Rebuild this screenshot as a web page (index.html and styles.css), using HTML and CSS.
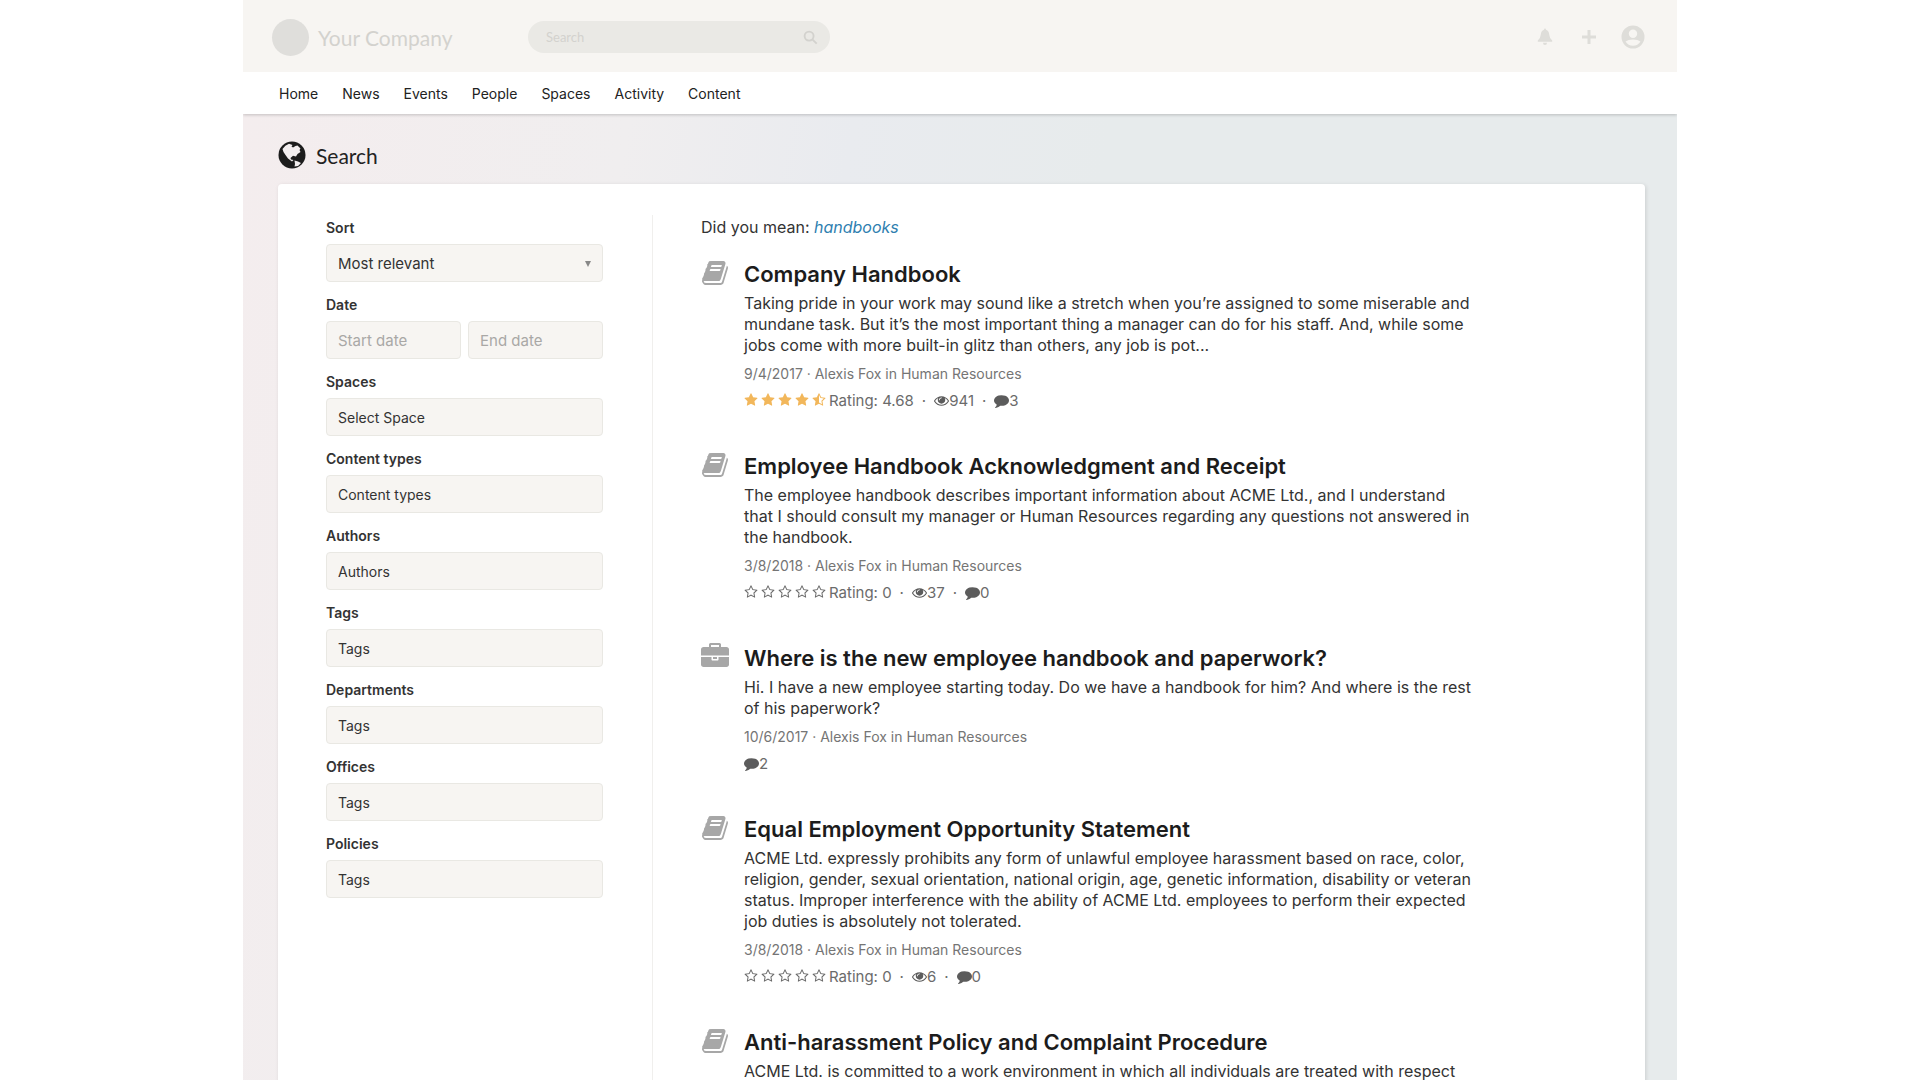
FILE: index.html
```html
<!DOCTYPE html>
<html lang="en">
<head>
<meta charset="utf-8">
<title>Search - Your Company</title>
<meta name="viewport" content="width=device-width, initial-scale=1">
<link rel="stylesheet" href="styles.css">
</head>
<body>
<svg class="sprite" aria-hidden="true">
  <symbol id="star" viewBox="0 0 1792 1792"><path d="M1728 647q0 22-26 48l-363 354 86 500q1 7 1 20 0 21-10.5 35.5t-30.5 14.5q-19 0-40-12l-449-236-449 236q-22 12-40 12-21 0-31.5-14.5t-10.5-35.5q0-6 2-20l86-500-364-354q-25-27-25-48 0-37 56-46l502-73 225-455q19-41 49-41t49 41l225 455 502 73q56 9 56 46z"/></symbol>
  <symbol id="star-o" viewBox="0 0 1792 1792"><path d="M1201 1004l306-297-422-62-189-382-189 382-422 62 306 297-73 421 378-199 377 199zm527-357q0 22-26 48l-363 354 86 500q1 7 1 20 0 50-41 50-19 0-40-12l-449-236-449 236q-22 12-40 12-21 0-31.5-14.5t-10.5-35.5q0-6 2-20l86-500-364-354q-25-27-25-48 0-37 56-46l502-73 225-455q19-41 49-41t49 41l225 455 502 73q56 9 56 46z"/></symbol>
  <symbol id="star-half" viewBox="0 0 1792 1792"><path d="M1250 957l257-250-356-52-66-10-30-60-159-322v963l59 31 318 168-60-355-12-66zm452-262l-363 354 86 500q5 33-6 51.5t-34 18.5q-17 0-40-12l-449-236-449 236q-23 12-40 12-23 0-34-18.5t-6-51.5l86-500-364-354q-32-32-23-59.5t54-34.5l502-73 225-455q20-41 49-41 28 0 49 41l225 455 502 73q45 7 54 34.5t-24 59.5z"/></symbol>
  <symbol id="eye" viewBox="0 0 1792 1792"><path d="M1664 960q-152-236-381-353 61 104 61 225 0 185-131.5 316.5t-316.5 131.5-316.5-131.5-131.5-316.5q0-121 61-225-229 117-381 353 133 205 333.5 326.5t434.5 121.5 434.5-121.5 333.5-326.5zm-720-384q0-20-14-34t-34-14q-125 0-214.5 89.5t-89.5 214.5q0 20 14 34t34 14 34-14 14-34q0-86 61-147t147-61q20 0 34-14t14-34zm848 384q0 34-20 69-140 230-376.5 368.5t-499.5 138.5-499.5-139-376.5-368q-20-35-20-69t20-69q140-229 376.5-368t499.5-139 499.5 139 376.5 368q20 35 20 69z"/></symbol>
  <symbol id="comment" viewBox="0 0 1792 1792"><path d="M1792 896q0 174-120 321.5t-326 233-450 85.5q-70 0-145-8-198 175-460 242-49 14-114 22-17 2-30.5-9t-17.5-29v-1q-3-4-.5-12t2-10 4.5-9.5l6-9 7-8.5 8-9q7-8 31-34.5t34.5-38 31-39.5 32.5-51 27-59 26-76q-157-89-247.5-220t-90.5-281q0-130 71-248.5t191-204.5 286-136.5 348-50.5q244 0 450 85.5t326 233 120 321.5z"/></symbol>
  <symbol id="book" viewBox="0 0 1792 1792"><path d="M1703 478q40 57 18 129l-275 906q-19 64-76.5 107.5t-122.5 43.5h-923q-77 0-148.5-53.5t-99.5-131.5q-24-67-2-127 0-4 3-27t4-37q1-8-3-21.5t-3-19.5q2-11 8-21t16.5-23.5 16.5-23.5q23-38 45-91.5t30-91.5q3-10 .5-30t-.5-28q3-11 17-28t17-23q21-36 42-92t25-90q1-9-2.5-32t.5-28q4-13 22-30.5t22-22.5q19-26 42.5-84.5t27.5-96.5q1-8-3-25.5t-2-26.5q2-8 9-18t18-23 17-21q8-12 16.5-30.5t15-35 16-36 19.5-32 26.5-23.5 36-11.5 47.5 5.5l-1 3q38-9 51-9h761q74 0 114 56t18 130l-274 906q-36 119-71.5 153.5t-128.5 34.5h-869q-27 0-38 15-11 16-1 43 24 70 144 70h923q29 0 56-15.5t35-41.5l300-987q7-22 5-57 38 15 59 43zm-1064 2q-4 13 2 22.5t20 9.5h608q13 0 25.5-9.5t16.5-22.5l21-64q4-13-2-22.5t-20-9.5h-608q-13 0-25.5 9.5t-16.5 22.5zm-83 256q-4 13 2 22.5t20 9.5h608q13 0 25.5-9.5t16.5-22.5l21-64q4-13-2-22.5t-20-9.5h-608q-13 0-25.5 9.5t-16.5 22.5z"/></symbol>
  <symbol id="briefcase" viewBox="0 0 1792 1792"><path d="M640 256h512v-128h-512v128zm1152 640v480q0 66-47 113t-113 47h-1472q-66 0-113-47t-47-113v-480h672v160q0 26 19 45t45 19h320q26 0 45-19t19-45v-160h672zm-768 0v128h-256v-128h256zm768-480v384h-1792v-384q0-66 47-113t113-47h352v-160q0-40 28-68t68-28h576q40 0 68 28t28 68v160h352q66 0 113 47t47 113z"/></symbol>
</svg>

<div class="site">
  <header class="topbar">
    <a class="brand" href="#"><span class="brand-mark"></span>Your Company</a>
    <form class="site-search" role="search">
      <input class="site-search-input" type="search" placeholder="Search" aria-label="Search the site">
      <button class="icon-button" type="button" aria-label="Search">
        <svg class="icon-search" viewBox="0 0 16 16"><circle cx="6.5" cy="6.5" r="4.8"/><path d="M10.2 10.2L14.6 14.6"/></svg>
      </button>
    </form>
    <div class="actions">
      <button class="icon-button" type="button" aria-label="Notifications">
        <svg class="icon-action" viewBox="0 0 16 18"><path d="M8 0.5q1 0 1 1.200Q12 2.600 12.300 7q0.300 3.600 2.900 5.600v1.200H0.800v-1.200Q3.400 10.600 3.700 7Q4 2.600 7 1.700Q7 0.500 8 0.500zM6 14.800h4q0 2.200-2 2.200t-2-2.200z"/></svg>
      </button>
      <button class="icon-button" type="button" aria-label="Create">
        <svg class="icon-action" viewBox="0 0 16 18"><path d="M6.500 2h3v5.500h5.500v3H9.500v5.500h-3v-5.500H1v-3h5.500z"/></svg>
      </button>
      <button class="icon-button" type="button" aria-label="Account">
        <svg class="icon-account" viewBox="0 0 24 24"><path fill-rule="evenodd" d="M12 0.500a11.500 11.500 0 1 0 0 23a11.500 11.500 0 1 0 0-23zM12 4.500a4.200 4.200 0 1 1 0 8.400a4.200 4.200 0 1 1 0-8.400zM4.500 16.500q2.500-2 7.500-2t7.500 2q-2.600 4.200-7.500 4.200t-7.500-4.200z"/></svg>
      </button>
    </div>
  </header>

  <nav class="mainnav" aria-label="Main">
    <a href="#">Home</a>
    <a href="#">News</a>
    <a href="#">Events</a>
    <a href="#">People</a>
    <a href="#">Spaces</a>
    <a href="#">Activity</a>
    <a href="#">Content</a>
  </nav>

  <main class="page">
    <div class="page-title">
      <svg class="icon-globe" viewBox="0 0 28 28" aria-hidden="true"><circle cx="14" cy="14" r="13.500" fill="#1c1c1c"/><path fill="#f3eeef" d="M4.500 8Q7 4 11 2.800L14.500 4L13.500 5.500L15 6.500L17.500 5L19.500 4.500L22.500 7.500L21.500 9L22.500 11L19.500 13L18 15.500L15 14.800L12.500 17L13 18.500L15.500 19L14 20.500L10 17.500L7.500 14L5.500 11zM16.500 19.500L20 20.500L23 22L20 25L16.500 25.500L17 23z"/></svg>
      <h1>Search</h1>
    </div>

    <div class="panel">
      <form class="filters">
        <div class="field">
          <label for="sort">Sort</label>
          <div class="select"><select class="control control-large" id="sort"><option>Most relevant</option></select></div>
        </div>
        <div class="field">
          <label for="start">Date</label>
          <div class="dates">
            <input class="control control-large" id="start" type="text" placeholder="Start date">
            <input class="control control-large" type="text" placeholder="End date" aria-label="End date">
          </div>
        </div>
        <div class="field"><label for="spaces">Spaces</label><input class="control" id="spaces" type="text" value="Select Space"></div>
        <div class="field"><label for="types">Content types</label><input class="control" id="types" type="text" value="Content types"></div>
        <div class="field"><label for="authors">Authors</label><input class="control" id="authors" type="text" value="Authors"></div>
        <div class="field"><label for="tags">Tags</label><input class="control" id="tags" type="text" value="Tags"></div>
        <div class="field"><label for="departments">Departments</label><input class="control" id="departments" type="text" value="Tags"></div>
        <div class="field"><label for="offices">Offices</label><input class="control" id="offices" type="text" value="Tags"></div>
        <div class="field"><label for="policies">Policies</label><input class="control" id="policies" type="text" value="Tags"></div>
      </form>

      <section class="results" aria-label="Results">
        <p class="suggestion">Did you mean: <a href="#">handbooks</a></p>

        <article class="result">
          <svg class="result-icon"><use href="#book"/></svg>
          <div class="result-body">
            <h2><a href="#">Company Handbook</a></h2>
            <p class="excerpt">Taking pride in your work may sound like a stretch when you’re assigned to some miserable and mundane task. But it’s the most important thing a manager can do for his staff. And, while some jobs come with more built-in glitz than others, any job is pot...</p>
            <p class="byline">9/4/2017 · Alexis Fox in Human Resources</p>
            <div class="stats">
              <span class="stars stars-rated"><svg><use href="#star"/></svg><svg><use href="#star"/></svg><svg><use href="#star"/></svg><svg><use href="#star"/></svg><svg><use href="#star-half"/></svg></span>
              <span>Rating: 4.68</span><span class="dot">·</span>
              <span class="stat"><svg><use href="#eye"/></svg>941</span><span class="dot">·</span>
              <span class="stat"><svg><use href="#comment"/></svg>3</span>
            </div>
          </div>
        </article>

        <article class="result">
          <svg class="result-icon"><use href="#book"/></svg>
          <div class="result-body">
            <h2><a href="#">Employee Handbook Acknowledgment and Receipt</a></h2>
            <p class="excerpt">The employee handbook describes important information about ACME Ltd., and I understand that I should consult my manager or Human Resources regarding any questions not answered in the handbook.</p>
            <p class="byline">3/8/2018 · Alexis Fox in Human Resources</p>
            <div class="stats">
              <span class="stars"><svg><use href="#star-o"/></svg><svg><use href="#star-o"/></svg><svg><use href="#star-o"/></svg><svg><use href="#star-o"/></svg><svg><use href="#star-o"/></svg></span>
              <span>Rating: 0</span><span class="dot">·</span>
              <span class="stat"><svg><use href="#eye"/></svg>37</span><span class="dot">·</span>
              <span class="stat"><svg><use href="#comment"/></svg>0</span>
            </div>
          </div>
        </article>

        <article class="result">
          <svg class="result-icon"><use href="#briefcase"/></svg>
          <div class="result-body">
            <h2><a href="#">Where is the new employee handbook and paperwork?</a></h2>
            <p class="excerpt">Hi. I have a new employee starting today. Do we have a handbook for him? And where is the rest of his paperwork?</p>
            <p class="byline">10/6/2017 · Alexis Fox in Human Resources</p>
            <div class="stats">
              <span class="stat"><svg><use href="#comment"/></svg>2</span>
            </div>
          </div>
        </article>

        <article class="result">
          <svg class="result-icon"><use href="#book"/></svg>
          <div class="result-body">
            <h2><a href="#">Equal Employment Opportunity Statement</a></h2>
            <p class="excerpt">ACME Ltd. expressly prohibits any form of unlawful employee harassment based on race, color, religion, gender, sexual orientation, national origin, age, genetic information, disability or veteran status. Improper interference with the ability of ACME Ltd. employees to perform their expected job duties is absolutely not tolerated.</p>
            <p class="byline">3/8/2018 · Alexis Fox in Human Resources</p>
            <div class="stats">
              <span class="stars"><svg><use href="#star-o"/></svg><svg><use href="#star-o"/></svg><svg><use href="#star-o"/></svg><svg><use href="#star-o"/></svg><svg><use href="#star-o"/></svg></span>
              <span>Rating: 0</span><span class="dot">·</span>
              <span class="stat"><svg><use href="#eye"/></svg>6</span><span class="dot">·</span>
              <span class="stat"><svg><use href="#comment"/></svg>0</span>
            </div>
          </div>
        </article>

        <article class="result">
          <svg class="result-icon"><use href="#book"/></svg>
          <div class="result-body">
            <h2><a href="#">Anti-harassment Policy and Complaint Procedure</a></h2>
            <p class="excerpt">ACME Ltd. is committed to a work environment in which all individuals are treated with respect</p>
          </div>
        </article>
      </section>
    </div>
  </main>
</div>
</body>
</html>
```
FILE: styles.css
```css
* { box-sizing: border-box; }

body {
  margin: 0;
  height: 100vh;
  overflow: hidden;
  background: #fff;
  color: #333;
  font-family: Inter, "Liberation Sans", sans-serif;
  font-size: 16px;
  line-height: 21px;
}

h1, h2, p { margin: 0; }
a { color: inherit; text-decoration: none; }
input, select, button { font: inherit; }
svg { display: block; fill: currentColor; }

.sprite { display: none; }

.site {
  max-width: 1434px;
  min-height: 100vh;
  margin: 0 auto;
  display: flex;
  flex-direction: column;
}

/* Top bar */
.topbar {
  display: flex;
  align-items: center;
  height: 72px;
  flex: none;
  padding: 2px 32px 0 29px;
  background: #f7f5f2;
  color: #deddd9;
}

.brand {
  display: flex;
  align-items: center;
  gap: 9px;
  width: 256px;
  font-family: Lato, "Liberation Sans", sans-serif;
  font-size: 21px;
  color: #d3d2ce;
}

.brand-mark {
  width: 37px;
  height: 37px;
  border-radius: 50%;
  background: #dfdedb;
}

.site-search {
  display: flex;
  align-items: center;
  width: 302px;
  height: 32px;
  padding: 0 12px 0 18px;
  border-radius: 16px;
  background: #eae9e5;
}

.site-search-input {
  flex: 1;
  min-width: 0;
  padding: 0;
  border: 0;
  background: none;
  font-family: Lato, "Liberation Sans", sans-serif;
  font-size: 13px;
  color: #d3d2ce;
}
.site-search-input::placeholder { color: #d3d2ce; }

.icon-button {
  padding: 0;
  border: 0;
  background: none;
  color: inherit;
}

.icon-search {
  width: 15px;
  height: 15px;
  fill: none;
  stroke: #d3d2ce;
  stroke-width: 2;
}

.actions {
  display: flex;
  align-items: center;
  gap: 20px;
  margin-left: auto;
}
.icon-action { width: 24px; height: 18px; }
.icon-account { width: 24px; height: 24px; }

/* Main navigation */
.mainnav {
  position: relative;
  display: flex;
  align-items: center;
  gap: 24px;
  height: 42px;
  flex: none;
  padding: 0 36px;
  background: #fff;
  box-shadow: 0 1px 3px rgba(0, 0, 0, 0.2);
  clip-path: inset(0 0 -6px 0);
  font-size: 14px;
  color: #222;
}

/* Page */
.page {
  flex: 1;
  display: flex;
  flex-direction: column;
  padding: 26px 32px 0 35px;
  background: linear-gradient(100deg, #f4edee 0, #f0eeef 24%, #e9ebef 38%, #e7ebec 54%, #e7ebec 100%);
}

.page-title {
  display: flex;
  align-items: center;
  gap: 10px;
  height: 30px;
  margin-bottom: 14px;
}
.page-title h1 {
  font-family: Lato, "Liberation Sans", sans-serif;
  font-size: 21px;
  font-weight: 400;
  color: #222;
}
.icon-globe { width: 28px; height: 28px; }

.panel {
  flex: 1;
  display: flex;
  align-items: stretch;
  padding: 31px 48px 0;
  border-radius: 4px 4px 0 0;
  background: #fff;
  box-shadow: 1px 1px 4px rgba(0, 0, 0, 0.12);
}

/* Filters */
.filters {
  flex: none;
  width: 327px;
  padding: 2px 49px 0 0;
  border-right: 1px solid #f0efed;
}
.field { margin-bottom: 12px; }
.field label {
  display: block;
  margin-bottom: 5px;
  font-size: 14px;
  line-height: 22px;
  font-weight: 600;
}

.control {
  display: block;
  width: 100%;
  min-width: 0;
  height: 38px;
  padding: 0 11px;
  border: 1px solid #e9e8e3;
  border-radius: 4px;
  background: #f7f5f2;
  color: #333;
  font-size: 14px;
  appearance: none;
}
.control-large { font-size: 15px; }
.control::placeholder { color: #a9a8a6; }
.dates { display: flex; gap: 7px; }

.select { position: relative; }
.select::after {
  content: "";
  position: absolute;
  top: 17px;
  right: 12px;
  border: 3px solid transparent;
  border-top: 6px solid #888;
  border-bottom: 0;
}

/* Results */
.results { padding-left: 48px; min-width: 0; }
.suggestion { padding-top: 2px; margin-bottom: 21px; }
.suggestion a { color: #2f7fb0; font-style: italic; }

.result {
  display: flex;
  align-items: flex-start;
  gap: 15px;
  margin-bottom: 40px;
}
.result-icon {
  flex: none;
  width: 28px;
  height: 28px;
  color: #a7a7a7;
}
.result-body { max-width: 734px; }
.result h2 {
  margin-bottom: 4px;
  font-size: 22px;
  line-height: 30px;
  font-weight: 600;
  color: #1c1c1c;
}
.byline {
  margin-top: 8px;
  font-size: 14px;
  line-height: 20px;
  color: #757575;
}
.stats {
  display: flex;
  align-items: center;
  margin-top: 5px;
  height: 22px;
  font-size: 15px;
  color: #6b6b6b;
}
.stars { display: flex; gap: 3px; margin-right: 3px; }
.stars svg { width: 14px; height: 14px; }
.stars-rated { color: #f2b75b; }
.stat { display: flex; align-items: center; }
.stat svg { width: 15px; height: 15px; color: #5c5c5c; }
.dot { padding: 0 8px; }
```
